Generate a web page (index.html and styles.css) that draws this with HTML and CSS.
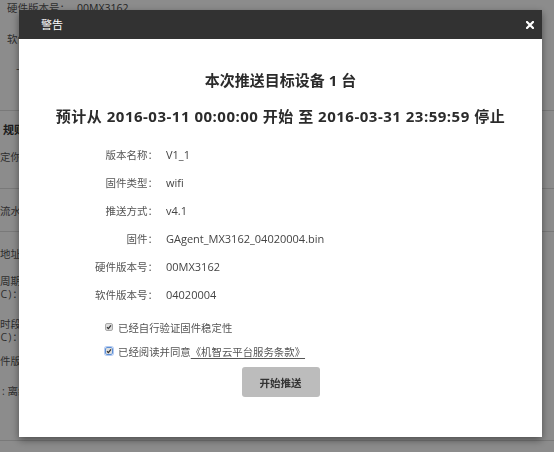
FILE: index.html
```html
<!DOCTYPE html>
<html lang="zh-CN">
<head>
<meta charset="utf-8">
<title>警告</title>
<link rel="stylesheet" href="styles.css">
</head>
<body>
<div class="page">
  <div class="bg-row r1"><span class="bg-label">硬件版本号：</span><span class="bg-val">00MX3162</span></div>
  <div class="bg-row r2"><span class="bg-label">软件版本号：</span></div>
  <div class="bg-row r3"><span class="bg-mark">上传</span></div>
  <div class="bg-line l1"></div>
  <div class="bg-row r5 bold">规则</div>
  <div class="bg-row r6">定你的</div>
  <div class="bg-line l2"></div>
  <div class="bg-row r8">流水线</div>
  <div class="bg-line l3"></div>
  <div class="bg-row r10">地址</div>
  <div class="bg-row two r11"><span>周期</span><br><span class="ind-b">(UTC)：</span></div>
  <div class="bg-row two r12"><span>时段</span><br><span class="ind-b">(UTC)：</span></div>
  <div class="bg-row r13">件版本</div>
  <div class="bg-row r14">: 离线</div>
  <div class="bg-line l4"></div>
</div>

<div class="backdrop"></div>

<div class="modal">
  <div class="modal-header">
    <span class="modal-title">警告</span>
    <button class="close" type="button" aria-label="关闭">
      <svg width="8" height="8" viewBox="0 0 8 8"><path d="M1 1L7 7M7 1L1 7" stroke="#fff" stroke-width="2.2" stroke-linecap="square"/></svg>
    </button>
  </div>
  <div class="modal-body">
    <h3 class="t1">本次推送目标设备 1 台</h3>
    <h3 class="t2">预计从 2016-03-11 00:00:00 开始 至 2016-03-31 23:59:59 停止</h3>
    <dl class="info">
      <dt>版本名称：</dt><dd>V1_1</dd>
      <dt>固件类型：</dt><dd>wifi</dd>
      <dt>推送方式：</dt><dd>v4.1</dd>
      <dt>固件：</dt><dd>GAgent_MX3162_04020004.bin</dd>
      <dt>硬件版本号：</dt><dd>00MX3162</dd>
      <dt>软件版本号：</dt><dd>04020004</dd>
    </dl>
    <div class="checks">
      <label class="check">
        <svg class="box" width="8" height="8" viewBox="0 0 8 8"><rect x="0.5" y="0.5" width="7" height="7" rx="1.5" fill="#dedede" stroke="#a8a8a8"/><path d="M2 4.2L3.4 5.6L6 2.4" fill="none" stroke="#333" stroke-width="1.3"/></svg>
        <span>已经自行验证固件稳定性</span>
      </label>
      <label class="check">
        <svg class="box focus" width="8" height="8" viewBox="0 0 8 8"><rect x="0.5" y="0.5" width="7" height="7" rx="1.5" fill="#dedede" stroke="#5b8fd6"/><path d="M2 4.2L3.4 5.6L6 2.4" fill="none" stroke="#333" stroke-width="1.3"/></svg>
        <span>已经阅读并同意<a class="terms" href="#">《机智云平台服务条款》</a></span>
      </label>
    </div>
    <div class="actions">
      <button class="btn" type="button">开始推送</button>
    </div>
  </div>
</div>
</body>
</html>
```

FILE: styles.css
```css
* { box-sizing: border-box; }
html, body { margin: 0; padding: 0; }
body {
  width: 554px;
  height: 452px;
  overflow: hidden;
  background: #fff;
  font-family: "Open Sans", "Noto Sans CJK SC", sans-serif;
  color: #555;
}

/* background page */
.page { font-size: 10.5px; }
.bg-row { height: 16px; line-height: 16px; white-space: nowrap; color: #555; }
.bg-row.two { height: 26px; line-height: 13px; }
.bold { font-weight: 700; color: #333; }
.bg-label { display: inline-block; padding-left: 7px; width: 77px; }
.bg-val { color: #444; }
.bg-mark { padding-left: 16px; }
.bg-line { height: 1px; background: #dcdcdc; }
.r2 { margin-top: 15px; }
.r3 { margin-top: 10px; }
.l1 { margin-top: 37px; }
.r5 { margin-top: 11px; padding-left: 3px; font-size: 11px; }
.r6 { margin-top: 11px; }
.l2 { margin-top: 23px; }
.r8 { margin-top: 14px; }
.l3 { margin-top: 12px; }
.r10 { margin-top: 14px; }
.r11 { margin-top: 13px; }
.r12 { margin-top: 17px; }
.ind-b { margin-left: -19px; letter-spacing: 1px; }
.r13 { margin-top: 9px; }
.r14 { margin-top: 14px; padding-left: 2px; }
.l4 { margin-top: 41px; }

.backdrop {
  position: fixed;
  inset: 0;
  background: rgba(0, 0, 0, 0.45);
}

/* modal */
.modal {
  position: fixed;
  left: 19px;
  top: 10px;
  width: 523px;
  height: 427px;
  background: #fff;
  box-shadow: 0 3px 8px rgba(0, 0, 0, 0.45);
  display: flex;
  flex-direction: column;
}
.modal-header {
  height: 29px;
  background: #323232;
  display: flex;
  align-items: center;
  justify-content: space-between;
  padding: 0 8px 0 22px;
}
.modal-title { color: #fff; font-size: 11px; line-height: 29px; }
.close {
  border: 0;
  background: none;
  padding: 0;
  width: 8px;
  height: 8px;
  display: flex;
  margin-top: 1px;
  cursor: pointer;
}

.modal-body {
  flex: 1;
  padding-top: 31px;
  display: flex;
  flex-direction: column;
}
.t1, .t2 {
  margin: 0;
  text-align: center;
  font-size: 15px;
  line-height: 20px;
  font-weight: 700;
  color: #2b2b2b;
}
.t2 { margin-top: 16px; letter-spacing: 0.5px; }

.info {
  margin: 14px 0 0;
  display: grid;
  grid-template-columns: 139px 1fr;
  column-gap: 8px;
  grid-auto-rows: 28px;
  align-items: center;
}
.info dt { text-align: right; font-size: 10.5px; color: #555; }
.info dd { margin: 0; font-size: 11px; color: #444; }

.checks {
  margin-top: 7px;
  padding-left: 86px;
  display: flex;
  flex-direction: column;
}
.check {
  height: 24px;
  display: flex;
  align-items: center;
  gap: 5px;
  font-size: 10.4px;
  color: #555;
}
.box { flex: none; }
.box.focus { border-radius: 2px; box-shadow: 0 0 0 1px rgba(120, 160, 230, 0.55); }
.terms { color: #555; text-decoration: underline; text-underline-offset: 2px; }

.actions {
  margin-top: 4px;
  display: flex;
  justify-content: center;
}
.btn {
  width: 78px;
  height: 30px;
  border: 0;
  border-radius: 3px;
  background: #bcbcbc;
  color: #333;
  font-family: "Open Sans", "Noto Sans CJK SC", sans-serif;
  font-size: 10.5px;
  font-weight: 700;
  padding: 0;
}
```
